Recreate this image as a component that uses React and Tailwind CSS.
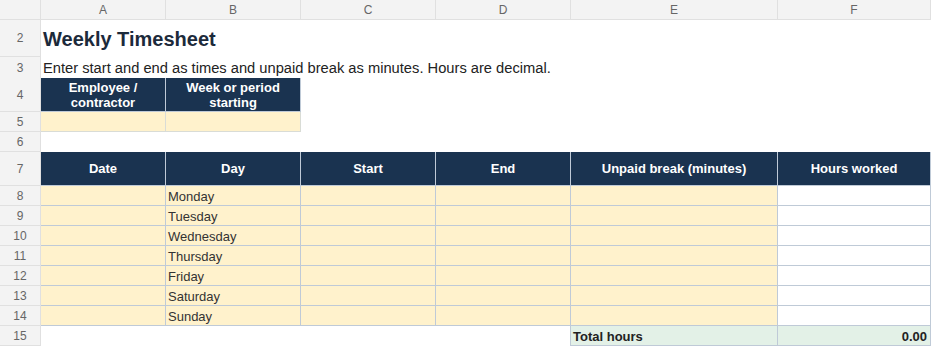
import React from 'react';

const COLS = 'grid grid-cols-[41px_125px_135px_135px_135px_207px_153px]';
const LINE = 'border-[#bfcad7]';

const RowNum = ({ n }) => (
  <div className="flex items-center justify-center bg-[#f3f3f3] border-r border-b border-[#e0e0e0] text-[12px] text-[#666]">
    {n}
  </div>
);

const Head = ({ children }) => (
  <div className={`flex items-center justify-center bg-[#1a3350] border-r border-b ${LINE} text-white font-bold text-[13px] leading-[15px] text-center`}>
    {children}
  </div>
);

const Yellow = ({ children }) => (
  <div className={`flex items-end bg-[#fff2cc] border-r border-b ${LINE} px-[2px] text-[13px] leading-[17px] text-[#333]`}>
    {children}
  </div>
);

const days = ['Monday', 'Tuesday', 'Wednesday', 'Thursday', 'Friday', 'Saturday', 'Sunday'];

export default function App() {
  return (
    <div className="w-[931px] h-[347px] bg-white overflow-hidden font-['Liberation_Sans',Arial,sans-serif]">
      {/* column letters */}
      <div className={`${COLS} h-[20px] bg-[#f3f3f3] text-[12px] text-[#666]`}>
        {['', 'A', 'B', 'C', 'D', 'E', 'F'].map((c, i) => (
          <div key={i} className="flex items-center justify-center border-r border-b border-[#e0e0e0]">
            {c}
          </div>
        ))}
      </div>

      {/* title */}
      <div className={`${COLS} h-[37px]`}>
        <RowNum n={2} />
        <div className="col-span-6 flex items-center pl-[2px] text-[20px] font-bold text-[#1c2a3b]">
          Weekly Timesheet
        </div>
      </div>

      <div className={`${COLS} h-[21px]`}>
        <RowNum n={3} />
        <div className="col-span-6 flex items-center pl-[2px] text-[14.7px] text-[#222]">
          Enter start and end as times and unpaid break as minutes. Hours are decimal.
        </div>
      </div>

      <div className={`${COLS} h-[34px]`}>
        <RowNum n={4} />
        <Head>Employee /<br />contractor</Head>
        <Head>Week or period<br />starting</Head>
        <div className="col-span-4" />
      </div>

      <div className={`${COLS} h-[20px]`}>
        <RowNum n={5} />
        <div className="bg-[#fff2cc] border-r border-b border-[#d9dcd6]" />
        <div className="bg-[#fff2cc] border-r border-b border-[#d9dcd6]" />
        <div className="col-span-4" />
      </div>

      <div className={`${COLS} h-[20px]`}>
        <RowNum n={6} />
        <div className="col-span-6" />
      </div>

      <div className={`${COLS} h-[34px]`}>
        <RowNum n={7} />
        <Head>Date</Head>
        <Head>Day</Head>
        <Head>Start</Head>
        <Head>End</Head>
        <Head>Unpaid break (minutes)</Head>
        <Head>Hours worked</Head>
      </div>

      {days.map((d, i) => (
        <div key={d} className={`${COLS} h-[20px]`}>
          <RowNum n={8 + i} />
          <Yellow />
          <Yellow>{d}</Yellow>
          <Yellow />
          <Yellow />
          <Yellow />
          <div className={`bg-white border-r border-b ${LINE}`} />
        </div>
      ))}

      <div className={`${COLS} h-[20px]`}>
        <RowNum n={15} />
        <div className="col-span-3" />
        <div className={`border-r ${LINE}`} />
        <div className={`flex items-end px-[2px] bg-[#e3f1e7] border-r border-b ${LINE} text-[13px] leading-[17px] font-bold text-[#222]`}>
          Total hours
        </div>
        <div className={`flex items-end justify-end px-[3px] bg-[#e3f1e7] border-r border-b ${LINE} text-[13px] leading-[17px] font-bold text-[#222]`}>
          0.00
        </div>
      </div>
    </div>
  );
}
